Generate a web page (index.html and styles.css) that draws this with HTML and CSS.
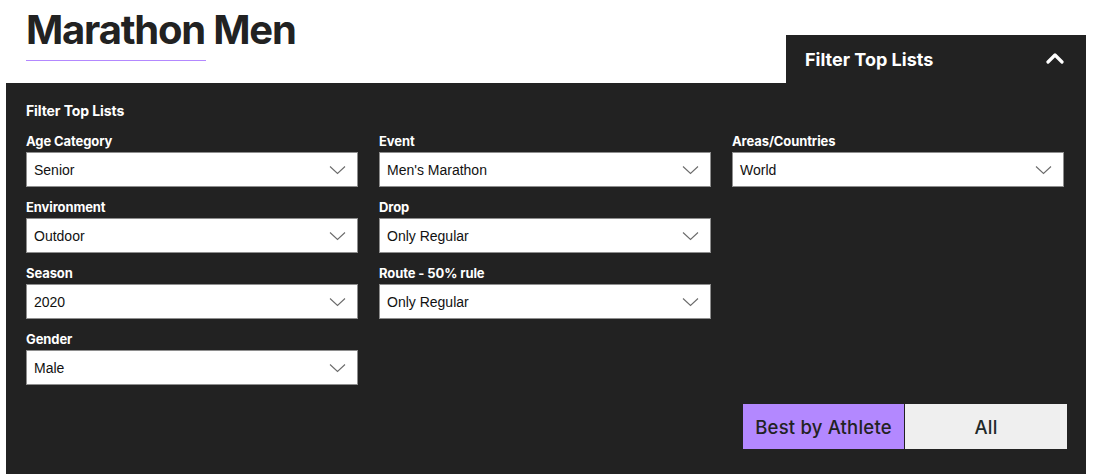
FILE: index.html
```html
<!DOCTYPE html>
<html lang="en">
<head>
<meta charset="utf-8">
<title>Marathon Men</title>
<link rel="stylesheet" href="styles.css">
</head>
<body>
<header class="top">
  <div class="title-block">
    <h1 class="title">Marathon Men</h1>
    <div class="title-rule"></div>
  </div>
  <div class="tab">
    <span class="tab-label">Filter Top Lists</span>
    <svg class="tab-caret" width="18" height="12" viewBox="0 0 18 12"><path d="M2 10 L9 3 L16 10" fill="none" stroke="#fff" stroke-width="3.2" stroke-linecap="round" stroke-linejoin="round"/></svg>
  </div>
</header>
<section class="panel">
  <h2 class="panel-title">Filter Top Lists</h2>
  <div class="grid">
    <div class="field"><div class="label">Age Category</div><div class="select"><span>Senior</span><svg class="chev" width="17" height="10" viewBox="0 0 17 10"><path d="M1 1.5 L8.5 8.5 L16 1.5" fill="none" stroke="#6b6b6b" stroke-width="1.1"/></svg></div></div>
    <div class="field"><div class="label">Event</div><div class="select"><span>Men's Marathon</span><svg class="chev" width="17" height="10" viewBox="0 0 17 10"><path d="M1 1.5 L8.5 8.5 L16 1.5" fill="none" stroke="#6b6b6b" stroke-width="1.1"/></svg></div></div>
    <div class="field"><div class="label">Areas/Countries</div><div class="select"><span>World</span><svg class="chev" width="17" height="10" viewBox="0 0 17 10"><path d="M1 1.5 L8.5 8.5 L16 1.5" fill="none" stroke="#6b6b6b" stroke-width="1.1"/></svg></div></div>

    <div class="field"><div class="label">Environment</div><div class="select"><span>Outdoor</span><svg class="chev" width="17" height="10" viewBox="0 0 17 10"><path d="M1 1.5 L8.5 8.5 L16 1.5" fill="none" stroke="#6b6b6b" stroke-width="1.1"/></svg></div></div>
    <div class="field"><div class="label">Drop</div><div class="select"><span>Only Regular</span><svg class="chev" width="17" height="10" viewBox="0 0 17 10"><path d="M1 1.5 L8.5 8.5 L16 1.5" fill="none" stroke="#6b6b6b" stroke-width="1.1"/></svg></div></div>
    <div class="field empty"></div>

    <div class="field"><div class="label">Season</div><div class="select"><span>2020</span><svg class="chev" width="17" height="10" viewBox="0 0 17 10"><path d="M1 1.5 L8.5 8.5 L16 1.5" fill="none" stroke="#6b6b6b" stroke-width="1.1"/></svg></div></div>
    <div class="field"><div class="label">Route - 50% rule</div><div class="select"><span>Only Regular</span><svg class="chev" width="17" height="10" viewBox="0 0 17 10"><path d="M1 1.5 L8.5 8.5 L16 1.5" fill="none" stroke="#6b6b6b" stroke-width="1.1"/></svg></div></div>
    <div class="field empty"></div>

    <div class="field"><div class="label">Gender</div><div class="select"><span>Male</span><svg class="chev" width="17" height="10" viewBox="0 0 17 10"><path d="M1 1.5 L8.5 8.5 L16 1.5" fill="none" stroke="#6b6b6b" stroke-width="1.1"/></svg></div></div>
  </div>
  <div class="toggle">
    <button class="toggle-btn active">Best by Athlete</button>
    <button class="toggle-btn">All</button>
  </div>
</section>
</body>
</html>
```
FILE: styles.css
```css
html, body {
  margin: 0;
  padding: 0;
  background: #fff;
}
body {
  font-family: Inter, "Noto Sans", sans-serif;
  color: #222;
}
.top {
  display: flex;
  justify-content: space-between;
  align-items: flex-end;
  margin: 0 8px 0 6px;
  height: 83px;
}
.title-block {
  padding-left: 20px;
  align-self: flex-start;
}
.title {
  margin: 0;
  padding-top: 6px;
  font-size: 40px;
  line-height: 48px;
  font-weight: 700;
  letter-spacing: -1.2px;
  color: #222;
}
.title-rule {
  width: 180px;
  height: 1px;
  background: #b388ff;
  margin-top: 6px;
}
.tab {
  width: 300px;
  height: 48px;
  background: #222;
  display: flex;
  align-items: center;
  justify-content: space-between;
  box-sizing: border-box;
  padding: 0 22px 0 19px;
}
.tab-label {
  color: #fff;
  font-size: 18px;
  font-weight: 700;
  letter-spacing: 0;
}
.tab-caret {
  display: block;
  margin-bottom: 2px;
}
.panel {
  background: #222;
  margin: 0 8px 0 6px;
  padding: 18px 22px 26px 20px;
}
.panel-title {
  margin: 0 0 12px;
  color: #fff;
  font-size: 14px;
  line-height: 20px;
  font-weight: 700;
  letter-spacing: -0.1px;
}
.grid {
  display: grid;
  grid-template-columns: repeat(3, 1fr);
  column-gap: 21px;
  row-gap: 12px;
}
.label {
  color: #fff;
  font-size: 13px;
  line-height: 16px;
  font-weight: 700;
  margin-bottom: 3px;
  letter-spacing: -0.1px;
}
.select {
  height: 35px;
  box-sizing: border-box;
  background: #fff;
  border: 1px solid #8e8e8e;
  display: flex;
  align-items: center;
  justify-content: space-between;
  padding: 0 11px 0 7px;
  font-family: "Liberation Sans", Arial, sans-serif;
  font-size: 14px;
  color: #111;
}
.chev {
  display: block;
}
.toggle {
  display: flex;
  justify-content: flex-end;
  margin-top: 19px;
  margin-right: -3px;
}
.toggle-btn {
  border: 0;
  margin: 0;
  height: 45px;
  width: 162px;
  background: #efefef;
  color: #1f2a2a;
  font-family: Inter, "Noto Sans", sans-serif;
  font-size: 18.5px;
  font-weight: 500;
  letter-spacing: 0.2px;
  padding: 0;
}
.toggle-btn.active {
  width: 161px;
  background: #b388ff;
  color: #222;
  margin-right: 1px;
}
```
